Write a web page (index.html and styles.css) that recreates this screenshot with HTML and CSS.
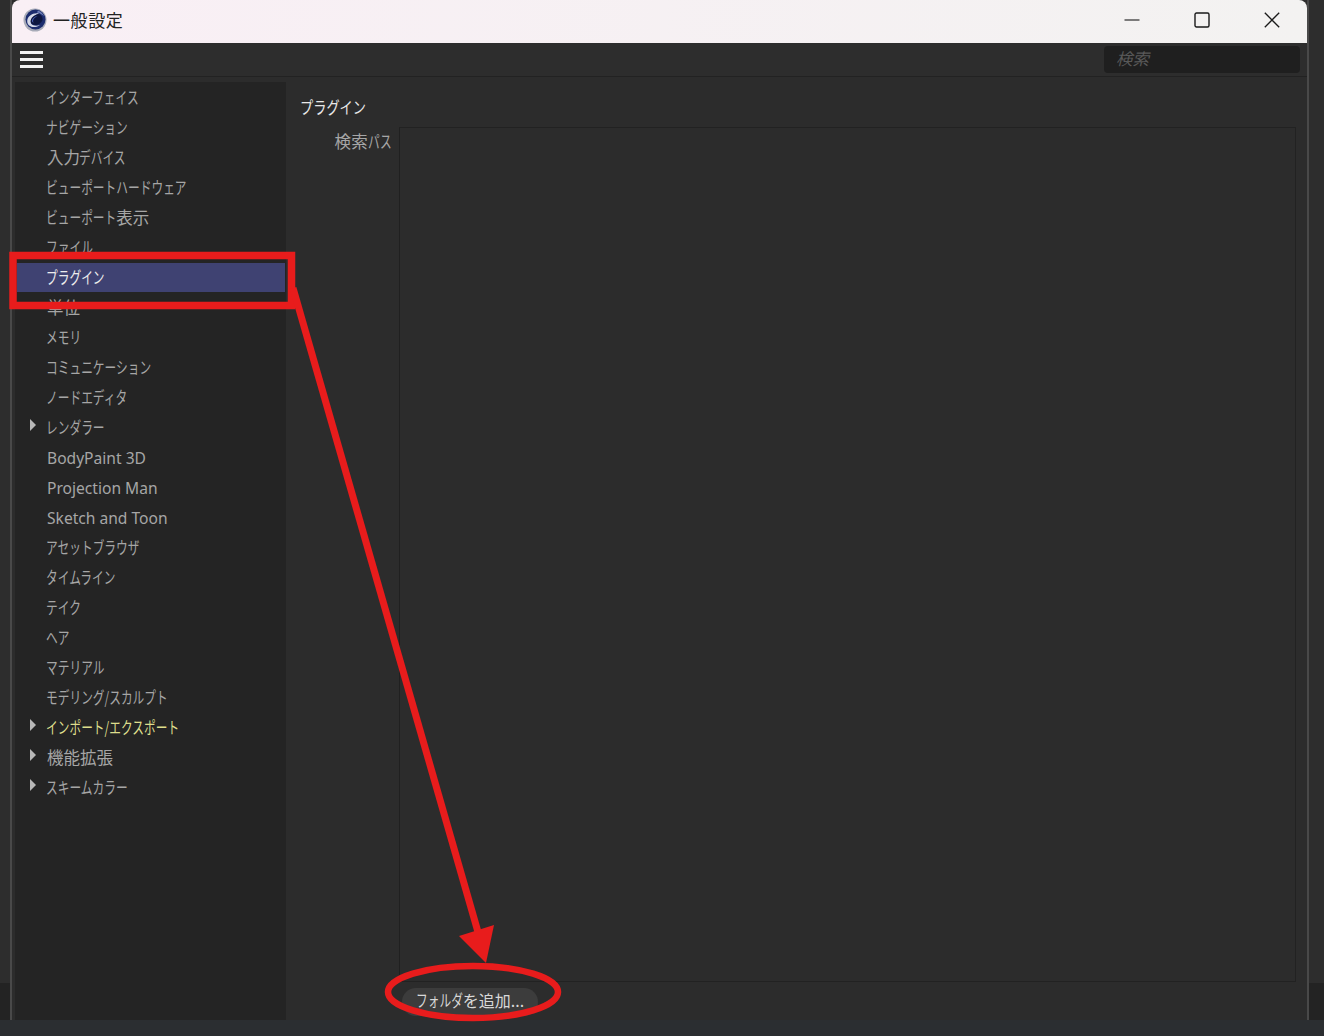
FILE: index.html
```html
<!DOCTYPE html>
<html lang="ja">
<head>
<meta charset="utf-8">
<title>一般設定</title>
<link rel="stylesheet" href="styles.css">
</head>
<body>
<div class="desktop">
  <div class="window">
    <header class="titlebar">
      <svg class="logo" viewBox="0 0 24 24" width="24" height="24" aria-hidden="true">
        <circle cx="12" cy="12" r="11.5" fill="#a8abb8"/>
        <circle cx="12.5" cy="11.5" r="10" fill="#1c2c6e"/>
        <path d="M15 2.5a10 10 0 0 1 6 6c-2-2-4-3.5-7-4z" fill="#6f7fb8"/>
        <path d="M16 5.5C10 4.5 4.5 8 4.2 13c-.2 4 3.6 6.5 8 6 2-.2 3.6-1 4.6-2-2.6 1-6.6 1-8.400-1-1.800-2.600-.2-7.500 7.600-10.500z" fill="#d5d9e8"/>
        <path d="M16 6c-5 .5-8.500 4-8.300 7.500.1 2.500 2.600 3.800 5.300 3.500 3-.3 5.700-2.500 6.500-5 .5-2-.7-4.700-3.500-6z" fill="#0d1640"/>
        <path d="M14.500 8c-2.500 1-4.500 3-4.500 5 0 1 .6 1.700 1.600 1.900-2-.1-2.800-1.200-2.600-2.600.3-1.900 2.500-3.800 5.500-4.300z" fill="#4f66bc"/>
      </svg>
      <span class="wintitle">一般設定</span>
      <div class="wincontrols">
        <svg class="winbtn" viewBox="0 0 16 16" width="16" height="16" aria-hidden="true"><path d="M0.500 8h15" stroke="#1a1a1a" stroke-width="1.100" fill="none"/></svg>
        <svg class="winbtn" viewBox="0 0 16 16" width="16" height="16" aria-hidden="true"><rect x="1" y="1" width="14" height="14" rx="1.500" stroke="#1a1a1a" stroke-width="1.400" fill="none"/></svg>
        <svg class="winbtn" viewBox="0 0 16 16" width="16" height="16" aria-hidden="true"><path d="M0.800 0.800l14.400 14.400M15.200 0.800L0.800 15.200" stroke="#1a1a1a" stroke-width="1.300" fill="none"/></svg>
      </div>
    </header>
    <div class="toolbar">
      <div class="burger"><i></i><i></i><i></i></div>
      <div class="search">検索</div>
    </div>
    <div class="body">
      <nav class="sidebar">
        <div class="row"><span class="ka">インターフェイス</span></div>
        <div class="row"><span class="ka">ナビゲーション</span></div>
        <div class="row">入力<span class="ka n4">デバイス</span></div>
        <div class="row"><span class="ka">ビューポートハードウェア</span></div>
        <div class="row"><span class="ka n6">ビューポート</span>表示</div>
        <div class="row"><span class="ka">ファイル</span></div>
        <div class="row selected"><span class="ka">プラグイン</span></div>
        <div class="row">単位</div>
        <div class="row"><span class="ka">メモリ</span></div>
        <div class="row"><span class="ka">コミュニケーション</span></div>
        <div class="row"><span class="ka">ノードエディタ</span></div>
        <div class="row parent"><span class="ka">レンダラー</span></div>
        <div class="row latin">BodyPaint 3D</div>
        <div class="row latin">Projection Man</div>
        <div class="row latin">Sketch and Toon</div>
        <div class="row"><span class="ka">アセットブラウザ</span></div>
        <div class="row"><span class="ka">タイムライン</span></div>
        <div class="row"><span class="ka">テイク</span></div>
        <div class="row"><span class="ka">ヘア</span></div>
        <div class="row"><span class="ka">マテリアル</span></div>
        <div class="row"><span class="ka">モデリング/スカルプト</span></div>
        <div class="row parent accent"><span class="ka">インポート/エクスポート</span></div>
        <div class="row parent">機能拡張</div>
        <div class="row parent"><span class="ka">スキームカラー</span></div>
      </nav>
      <main class="main">
        <h1 class="heading"><span class="ka">プラグイン</span></h1>
        <div class="field">
          <div class="label">検索<span class="ka n2">パス</span></div>
          <div class="listbox"></div>
        </div>
        <div class="actions">
          <button class="btn" type="button"><span class="ka n4">フォルダ</span>を追加...</button>
        </div>
      </main>
    </div>
  </div>
  <div class="taskstrip"></div>
</div>
<svg class="annot" viewBox="0 0 1324 1036" width="1324" height="1036" aria-hidden="true">
  <rect x="13" y="255.500" width="278.500" height="50" fill="none" stroke="#e81c1c" stroke-width="7.500"/>
  <path d="M293 288L478 932" stroke="#e81c1c" stroke-width="7" fill="none"/>
  <path d="M459 936L494 925L486 963z" fill="#e81c1c"/>
  <ellipse cx="473" cy="992" rx="85" ry="26" fill="none" stroke="#e81c1c" stroke-width="6.500"/>
</svg>
</body>
</html>
```
FILE: styles.css
```css
* { box-sizing: border-box; }
html, body { margin: 0; padding: 0; height: 100%; overflow: hidden; }
body {
  background: #2c2c2c;
  font-family: "Noto Sans CJK JP", "Noto Sans", sans-serif;
  font-size: 16px;
  color: #a6a6a6;
  position: relative;
}
.desktop {
  width: 1324px;
  height: 1036px;
  display: flex;
  flex-direction: column;
  background: linear-gradient(#2d2d2d 983px, #232323 983px);
}
.window {
  margin-left: 10px;
  width: 1299px;
  height: 1020px;
  border-left: 2px solid #494949;
  border-right: 2px solid #494949;
  display: flex;
  flex-direction: column;
  background: #2c2c2c;
}
.taskstrip { flex: 1; background: #2b2e31; }

.titlebar {
  height: 43px;
  display: flex;
  align-items: center;
  padding: 0 0 4px 11px;
  border-radius: 8px 8px 0 0;
  background: linear-gradient(90deg, #f9eff5, #f3f2f1);
  color: #222;
}
.logo { margin-right: 6px; flex: none; }
.wintitle { font-size: 17px; letter-spacing: 0.6px; line-height: 1; }
.wincontrols {
  margin-left: auto;
  margin-right: 27px;
  display: flex;
  gap: 54px;
}
.winbtn { display: block; }

.toolbar {
  height: 34px;
  display: flex;
  align-items: center;
  justify-content: space-between;
  padding: 0 7px 0 8px;
  background: #2d2d2d;
  border-bottom: 1px solid #222;
}
.burger { width: 23px; display: flex; flex-direction: column; gap: 4px; }
.burger i { display: block; height: 3px; background: #f2f2f2; }
.search {
  width: 196px;
  height: 27px;
  background: #1f1f1f;
  border-radius: 4px;
  padding-left: 12px;
  font-style: italic;
  font-size: 16.5px;
  line-height: 25px;
  color: #595959;
}

.body { flex: 1; display: flex; min-height: 0; padding: 5px 0 0 3px; }
.sidebar {
  width: 271px;
  flex: none;
  background: #242424;
  padding-top: 1px;
  margin-right: 2px;
}
.row {
  height: 30px;
  padding-left: 30px;
  margin: 0 1px 0 2px;
  line-height: 28px;
  font-size: 16.5px;
  white-space: nowrap;
  position: relative;
  color: #a6a6a6;
}
.ka {
  display: inline-block;
  font-size: 16.5px;
  transform: scaleX(0.71);
  transform-origin: left center;
}
.row .ka { margin-left: -1px; }
.n2 { margin-right: -9.6px; }
.n4 { margin-right: -19.1px; }
.n6 { margin-right: -28.7px; }
.latin { font-family: "Noto Sans", sans-serif; font-size: 15.6px; line-height: 30px; }
.selected { background: #3f4272; color: #ececec; height: 29px; margin-bottom: 1px; }
.accent { color: #dede8c; }
.parent::before {
  content: "";
  position: absolute;
  left: 13px;
  top: 6px;
  border-left: 6px solid #b8b8b8;
  border-top: 6px solid transparent;
  border-bottom: 6px solid transparent;
}

.main { flex: 1; display: flex; flex-direction: column; min-width: 0; padding-bottom: 5px; }
.heading {
  margin: 0;
  height: 45px;
  padding: 10px 0 0 12px;
  font-size: 16.5px;
  font-weight: 400;
  line-height: 30px;
  color: #e8e8e8;
}
.heading .ka { transform: scaleX(0.8); }
.field { flex: 1; display: flex; min-height: 0; padding-right: 11px; }
.label {
  width: 111px;
  flex: none;
  padding: 0 7px 0 0;
  text-align: right;
  font-size: 16.5px;
  line-height: 28px;
  letter-spacing: 0.3px;
}
.listbox { flex: 1; background: #2c2c2c; border: 1px solid #222; border-left-color: #202020; }
.actions { height: 33px; padding: 6px 0 0 114px; }
.btn {
  display: block;
  width: 136px;
  height: 28px;
  border: 0;
  border-radius: 14px;
  background: #3c3c3c;
  color: #d8d8d8;
  font: inherit;
  font-size: 16px;
  line-height: 24px;
  padding: 0 0 4px;
  white-space: nowrap;
}

.annot { position: absolute; left: 0; top: 0; pointer-events: none; }
```
